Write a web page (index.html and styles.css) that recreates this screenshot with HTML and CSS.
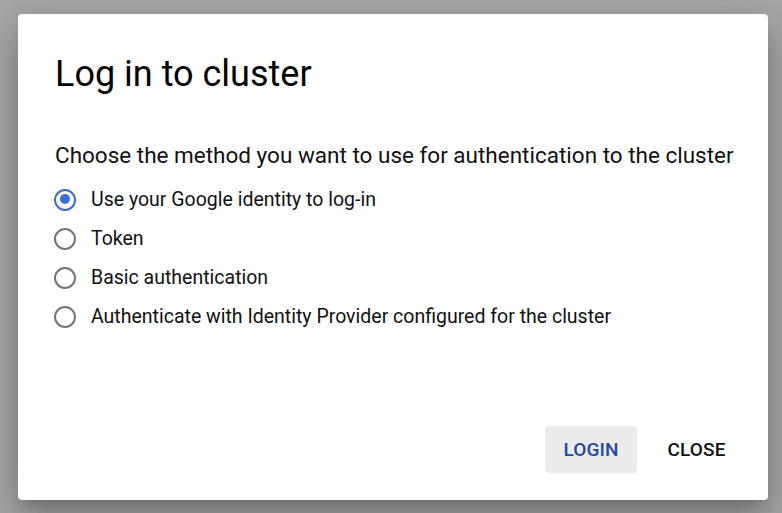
FILE: index.html
```html
<!DOCTYPE html>
<html>
<head>
<meta charset="utf-8">
<link rel="stylesheet" href="styles.css">
</head>
<body>
<div class="dialog">
  <h1 class="title">Log in to cluster</h1>
  <p class="prompt">Choose the method you want to use for authentication to the cluster</p>
  <div class="options">
    <label class="option"><span class="radio checked"></span><span class="label">Use your Google identity to log-in</span></label>
    <label class="option"><span class="radio"></span><span class="label">Token</span></label>
    <label class="option"><span class="radio"></span><span class="label">Basic authentication</span></label>
    <label class="option"><span class="radio"></span><span class="label">Authenticate with Identity Provider configured for the cluster</span></label>
  </div>
  <div class="actions">
    <button class="btn primary">LOGIN</button>
    <button class="btn">CLOSE</button>
  </div>
</div>
</body>
</html>
```
FILE: styles.css
```css
html, body {
  margin: 0;
  padding: 0;
}
body {
  width: 782px;
  height: 513px;
  background: #a8a8a8;
  font-family: Roboto, "Noto Sans", sans-serif;
  padding: 14px 0 0 18px;
  box-sizing: border-box;
  overflow: hidden;
}
.dialog {
  width: 750px;
  height: 486px;
  background: #fff;
  border-radius: 4px;
  box-shadow: 0 11px 15px -7px rgba(0,0,0,.2), 0 24px 38px 3px rgba(0,0,0,.14), 0 9px 46px 8px rgba(0,0,0,.12);
  box-sizing: border-box;
  padding: 0 24px 27px 37px;
  display: flex;
  flex-direction: column;
}
.title {
  margin: 38px 0 0;
  font-size: 36px;
  font-weight: 400;
  line-height: 44px;
  color: #000;
}
.prompt {
  margin: 44px 0 0;
  font-size: 22.5px;
  line-height: 30px;
  color: #111;
}
.options {
  display: flex;
  flex-direction: column;
  margin-top: 10px;
}
.option {
  display: flex;
  align-items: center;
  height: 39px;
  gap: 15px;
}
.radio {
  width: 22px;
  height: 22px;
  box-sizing: border-box;
  border: 2.5px solid #757575;
  border-radius: 50%;
  margin-left: -1px;
  position: relative;
  flex: none;
}
.radio.checked {
  border-color: #3b6ed6;
}
.radio.checked::after {
  content: "";
  position: absolute;
  left: 3.5px;
  top: 3.5px;
  width: 10px;
  height: 10px;
  border-radius: 50%;
  background: #3b6ed6;
}
.label {
  font-size: 19.5px;
  color: #111;
}
.actions {
  margin-top: auto;
  display: flex;
  justify-content: flex-end;
  gap: 12px;
}
.btn {
  font-family: Roboto, sans-serif;
  font-weight: 500;
  font-size: 19px;
  height: 47px;
  padding: 0 18.5px;
  border: none;
  border-radius: 4px;
  background: transparent;
  color: #111;
  letter-spacing: 0.1px;
}
.btn.primary {
  background: #ebebeb;
  color: #2246b0;
}
```
